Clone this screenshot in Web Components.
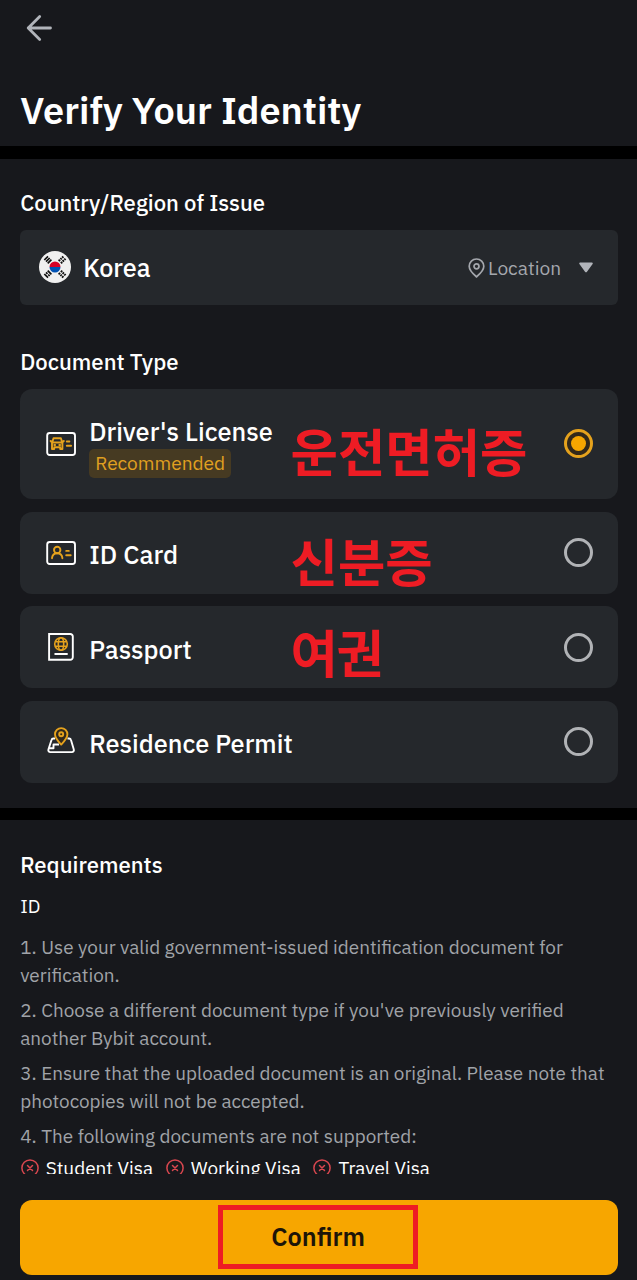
<!DOCTYPE html>
<html lang="en">
<head>
<meta charset="utf-8">
<title>Verify Your Identity</title>
<style>
  body {
    margin: 0;
    background: #17181c;
    color: #fff;
    font-family: "IBM Plex Sans", "Open Sans", "Noto Sans", sans-serif;
  }
</style>
</head>
<body>
<verify-page></verify-page>

<script>
// One line of text, scaled so that it takes up the given width
class TextLine extends HTMLElement {
  constructor() {
    super();
    this.attachShadow({ mode: "open" });
    this.shadowRoot.innerHTML = `
      <style>
        :host { display: block; padding-left: 0.2px; white-space: nowrap; }
        span { display: inline-block; }
      </style>
      <span id="text"></span>
    `;
  }

  connectedCallback() {
    const span = this.shadowRoot.getElementById("text");
    span.textContent = this.getAttribute("text");

    const width = Number(this.getAttribute("width"));
    if (width) {
      const natural = span.getBoundingClientRect().width;
      const size = parseFloat(getComputedStyle(span).fontSize);
      span.style.fontSize = size * width / natural + "px";
    }
  }
}
customElements.define("text-line", TextLine);

const icons = {
  back: `<svg width="28" height="28" viewBox="0 0 28 28" fill="none" stroke="#b1b4ba" stroke-width="2.8" stroke-linecap="round" stroke-linejoin="round"><path d="M14.7 2.5 3.2 14 14.7 25.5M3.2 14H25.5"/></svg>`,
  flag: `<svg width="32" height="32" viewBox="0 0 32 32">
    <circle cx="16" cy="16" r="16" fill="#f0f0f0"/>
    <path d="M10.5 16a5.5 5.5 0 0 1 11 0z" fill="#d80027"/>
    <path d="M10.5 16a5.5 5.5 0 0 0 11 0z" fill="#0052b4"/>
    <g stroke="#111" stroke-width="1.7">
      <path d="M5.3 9 9 5.3M7 10.7 10.7 7M8.7 12.4 12.4 8.7"/>
      <path d="M23 5.3l1.5 1.5M25.2 7.5 26.7 9M21.3 7l1.5 1.5M23.5 9.2 25 10.7M19.6 8.7l1.5 1.5M21.8 10.9l1.5 1.5"/>
      <path d="M5.3 23 9 26.7M7 21.3l1.5 1.5M9.2 23.5l1.5 1.5M8.7 19.6l3.7 3.7"/>
      <path d="M23 26.7l1.5-1.5M25.2 24.5 26.7 23M21.3 25l1.5-1.5M23.5 22.8 25 21.3M19.6 23.3l1.5-1.5M21.8 21.1l1.5-1.5"/>
    </g></svg>`,
  pin: `<svg width="17" height="20" viewBox="0 0 17 20" fill="none" stroke="#a4a7ad" stroke-width="1.7"><path d="M8.5 18.8C6 16.7 1.2 12.9 1.2 8.3a7.3 7.3 0 0 1 14.6 0c0 4.6-4.8 8.4-7.3 10.5z"/><circle cx="8.5" cy="8.3" r="2.5"/></svg>`,
  caret: `<svg width="14" height="11" viewBox="0 0 14 11" fill="#b1b4ba"><path d="M1.2.5h11.6c.9 0 1.3.8.8 1.5L8 9.7c-.5.7-1.5.7-2 0L.4 2C-.1 1.3.3.5 1.2.5z"/></svg>`,
  license: `<svg width="30" height="30" viewBox="0 0 30 30" fill="none" stroke-width="1.9" stroke-linecap="round" stroke-linejoin="round"><rect x="1.2" y="4" width="27.8" height="22" rx="2.5" stroke="#fff"/><g stroke="#e5a21d"><path d="M6.2 13.5 7.5 9.3h7.4l1.3 4.2M4.6 12l1.6 1.5h10L17.8 12M6 13.8V20h2.2v-1.8h6V20h2.2v-6.2M8.3 16h.8M13.3 16h.8"/><path d="M20.8 12.5h2.6M20.8 16.8h4.3"/></g></svg>`,
  idCard: `<svg width="30" height="30" viewBox="0 0 30 30" fill="none" stroke-width="1.9" stroke-linecap="round" stroke-linejoin="round"><rect x="1.2" y="4" width="27.8" height="22" rx="2.5" stroke="#fff"/><g stroke="#e5a21d"><circle cx="11.2" cy="12" r="3.2"/><path d="M6 20.2c.3-3 2.4-5 5.2-5s4.9 2 5.2 5M20.2 12.9h2.6M20.2 17.2h4.5"/></g></svg>`,
  passport: `<svg width="30" height="30" viewBox="0 0 30 30" fill="none" stroke-width="1.9"><path stroke="#fff" d="M3.1 2H24.3a2.5 2.5 0 0 1 2.5 2.5V25.3a2.5 2.5 0 0 1-2.5 2.5H3.1z"/><path stroke="#fff" stroke-linecap="round" d="M9.2 22H21"/><g stroke="#e5a21d" stroke-width="1.6"><circle cx="15" cy="12" r="6.3"/><ellipse cx="15" cy="12" rx="2.7" ry="6.3"/><path d="M9.3 9.8H20.7M9.3 14.2H20.7"/></g></svg>`,
  residence: `<svg width="30" height="30" viewBox="0 0 30 30" fill="none" stroke-width="1.9" stroke-linejoin="round"><path stroke="#fff" d="M9 11.5H7.5a2 2 0 0 0-2 1.5L2.4 22.5a2 2 0 0 0 2 2.6H25.8a2 2 0 0 0 2-2.6L25 13a2 2 0 0 0-2-1.5H21.5M3 21.3H7.5V17.5H13"/><g stroke="#e5a21d"><path d="M15.2 17.6C12.5 14.8 9 11.3 9 7.3a6.2 6.2 0 0 1 12.4 0c0 4-3.5 7.5-6.2 10.3z" fill="#33291a"/><circle cx="15.2" cy="7.3" r="2"/></g></svg>`,
  cross: `<svg width="18" height="18" viewBox="0 0 18 18" fill="none" stroke="#d9474f" stroke-width="1.5" stroke-linecap="round"><circle cx="9" cy="9" r="8.1"/><path d="M6.5 6.5l5 5M11.5 6.5l-5 5"/></svg>`
};

class UiIcon extends HTMLElement {
  constructor() {
    super();
    this.attachShadow({ mode: "open" });
  }

  connectedCallback() {
    this.shadowRoot.innerHTML = `
      <style>:host { display: block; flex: none; } svg { display: block; }</style>
      ${icons[this.getAttribute("name")]}
    `;
  }
}
customElements.define("ui-icon", UiIcon);

class UiRadio extends HTMLElement {
  constructor() {
    super();
    this.attachShadow({ mode: "open" });
    this.shadowRoot.innerHTML = `
      <style>
        :host {
          display: grid;
          place-items: center;
          flex: none;
          box-sizing: border-box;
          width: 29px;
          height: 29px;
          border: 3px solid #b1b3b6;
          border-radius: 50%;
        }
        :host([checked]) { border-color: #e5a21d; background: #33291a; }
        i { display: none; width: 15px; height: 15px; border-radius: 50%; background: #f7a600; }
        :host([checked]) i { display: block; }
      </style>
      <i></i>
    `;
  }
}
customElements.define("ui-radio", UiRadio);

class CountrySelect extends HTMLElement {
  constructor() {
    super();
    this.attachShadow({ mode: "open" });
    this.shadowRoot.innerHTML = `
      <style>
        :host {
          display: flex;
          align-items: center;
          height: 75px;
          box-sizing: border-box;
          padding: 0 25px 0 19px;
          border-radius: 6px;
          background: #25282c;
        }
        ui-icon[name="flag"] { margin-bottom: 1px; }
        .name { flex: 1; margin-left: 12px; font-size: 25.2px; font-weight: 500; line-height: 34px; }
        .location { width: 72px; margin: 0 19px 0 3px; font-size: 18.9px; line-height: 28px; color: #a4a7ad; }
      </style>
      <ui-icon name="flag"></ui-icon>
      <text-line class="name" text="Korea" width="67.5"></text-line>
      <ui-icon name="pin"></ui-icon>
      <text-line class="location" text="Location" width="73"></text-line>
      <ui-icon name="caret"></ui-icon>
    `;
  }
}
customElements.define("country-select", CountrySelect);

class DocumentOption extends HTMLElement {
  constructor() {
    super();
    this.attachShadow({ mode: "open" });
  }

  connectedCallback() {
    this.shadowRoot.innerHTML = `
      <style>
        :host {
          display: flex;
          align-items: center;
          position: relative;
          height: 82px;
          box-sizing: border-box;
          padding: 0 25px 0 26px;
          border-radius: 12px;
          background: #25282c;
        }
        :host([tall]) { height: 110px; padding-bottom: 1px; }
        .body {
          flex: 1;
          padding-top: 5px;
          margin-left: 13px;
          font-size: 25.2px;
          font-weight: 500;
          line-height: 34px;
        }
        /* big red note lying over the card */
        ::slotted([slot="note"]) {
          position: absolute;
          left: 270.5px;
          top: var(--note-top, 7px);
          color: #ee1c24;
          font: 700 51.5px/76px "Noto Sans CJK KR", sans-serif;
        }
      </style>
      <ui-icon name="${this.getAttribute("icon")}"></ui-icon>
      <div class="body"><slot></slot></div>
      <slot name="note"></slot>
      <ui-radio ${this.hasAttribute("checked") ? "checked" : ""}></ui-radio>
    `;
  }
}
customElements.define("document-option", DocumentOption);

class UiBadge extends HTMLElement {
  constructor() {
    super();
    this.attachShadow({ mode: "open" });
    this.shadowRoot.innerHTML = `
      <style>
        :host {
          display: block;
          box-sizing: border-box;
          width: 142px;
          height: 29px;
          padding-left: 6px;
          border-radius: 5px;
          background: #463a22;
          color: #e0a020;
          font-size: 18.9px;
          font-weight: 400;
          line-height: 28px;
        }
      </style>
      <slot></slot>
    `;
  }
}
customElements.define("ui-badge", UiBadge);

class VisaItem extends HTMLElement {
  constructor() {
    super();
    this.attachShadow({ mode: "open" });
    this.shadowRoot.innerHTML = `
      <style>
        :host { display: flex; align-items: center; gap: 7px; color: #fff; }
      </style>
      <ui-icon name="cross"></ui-icon>
      <slot></slot>
    `;
  }
}
customElements.define("visa-item", VisaItem);

class ConfirmButton extends HTMLElement {
  constructor() {
    super();
    this.attachShadow({ mode: "open" });
    this.shadowRoot.innerHTML = `
      <style>
        :host {
          display: flex;
          justify-content: center;
          box-sizing: border-box;
          height: 75px;
          padding: 5px 2px 0 0;
          border-radius: 12px;
          background: #f7a600;
          color: #1d1508;
          font-size: 25.2px;
          font-weight: 600;
          line-height: 53px;
        }
        .frame {
          display: flex;
          justify-content: center;
          box-sizing: border-box;
          width: 200px;
          height: 64px;
          border: 5px solid #ee1c24;
        }
      </style>
      <div class="frame"><slot></slot></div>
    `;
  }
}
customElements.define("confirm-button", ConfirmButton);

class VerifyPage extends HTMLElement {
  constructor() {
    super();
    this.attachShadow({ mode: "open" });
    this.shadowRoot.innerHTML = `
      <style>
        :host {
          display: flex;
          flex-direction: column;
          width: 637px;
          height: 1280px;
          overflow: hidden;
        }
        header, section, footer { box-sizing: border-box; padding: 0 19px 0 20px; flex: none; }
        header { height: 146px; padding-top: 14px; }
        header ui-icon { margin: 0 0 43px 5px; }
        .title { font-size: 39.2px; font-weight: 600; line-height: 50px; }
        .bar { flex: none; height: 13px; background: #000; }
        .bar.low { height: 12px; }
        .form { height: 649px; padding-top: 29px; }
        h2 { margin: 0; font-size: 22px; font-weight: 500; line-height: 30px; }
        country-select { margin: 12px 0 42px; }
        .options { display: flex; flex-direction: column; gap: 12.5px; margin-top: 12px; }
        .rules { height: 354px; padding-top: 30px; overflow: hidden; font-size: 18.9px; line-height: 28px; color: #a0a3a8; }
        .rules h2 { color: #fff; }
        .sub { margin: 12px 0 13px; color: #fff; }
        .rule { margin-bottom: 7px; }
        .visas { display: flex; gap: 12.5px; margin: -3px 0 0 0.5px; }
        footer { padding-top: 26px; }
      </style>
      <header>
        <ui-icon name="back"></ui-icon>
        <text-line class="title" text="Verify Your Identity" width="341"></text-line>
      </header>
      <div class="bar"></div>
      <section class="form">
        <h2><text-line text="Country/Region of Issue" width="245"></text-line></h2>
        <country-select></country-select>
        <h2><text-line text="Document Type" width="158.5"></text-line></h2>
        <div class="options">
          <document-option icon="license" tall checked style="--note-top: 23px">
            <text-line text="Driver's License" width="183.5"></text-line>
            <ui-badge><text-line text="Recommended" width="130"></text-line></ui-badge>
            <span slot="note">운전면허증</span>
          </document-option>
          <document-option icon="idCard" style="--note-top: 10px">
            <text-line text="ID Card" width="89"></text-line>
            <span slot="note">신분증</span>
          </document-option>
          <document-option icon="passport">
            <text-line text="Passport" width="102.5"></text-line>
            <span slot="note" style="letter-spacing: -1.5px">여권</span>
          </document-option>
          <document-option icon="residence">
            <text-line text="Residence Permit" width="203.5"></text-line>
          </document-option>
        </div>
      </section>
      <div class="bar low"></div>
      <section class="rules">
        <h2><text-line text="Requirements" width="142.5"></text-line></h2>
        <text-line class="sub" text="ID"></text-line>
        <div class="rule">
          <text-line text="1. Use your valid government-issued identification document for" width="543"></text-line>
          <text-line text="verification." width="99.5"></text-line>
        </div>
        <div class="rule">
          <text-line text="2. Choose a different document type if you've previously verified" width="543.5"></text-line>
          <text-line text="another Bybit account." width="192"></text-line>
        </div>
        <div class="rule">
          <text-line text="3. Ensure that the uploaded document is an original. Please note that" width="584.5"></text-line>
          <text-line text="photocopies will not be accepted." width="284.5"></text-line>
        </div>
        <div class="rule">
          <text-line text="4. The following documents are not supported:" width="396.5"></text-line>
        </div>
        <div class="visas">
          <visa-item><text-line text="Student Visa" width="107.5"></text-line></visa-item>
          <visa-item><text-line text="Working Visa" width="110"></text-line></visa-item>
          <visa-item><text-line text="Travel Visa" width="91.5"></text-line></visa-item>
        </div>
      </section>
      <footer>
        <confirm-button><text-line text="Confirm" width="93.5"></text-line></confirm-button>
      </footer>
    `;
  }
}
customElements.define("verify-page", VerifyPage);
</script>
</body>
</html>
